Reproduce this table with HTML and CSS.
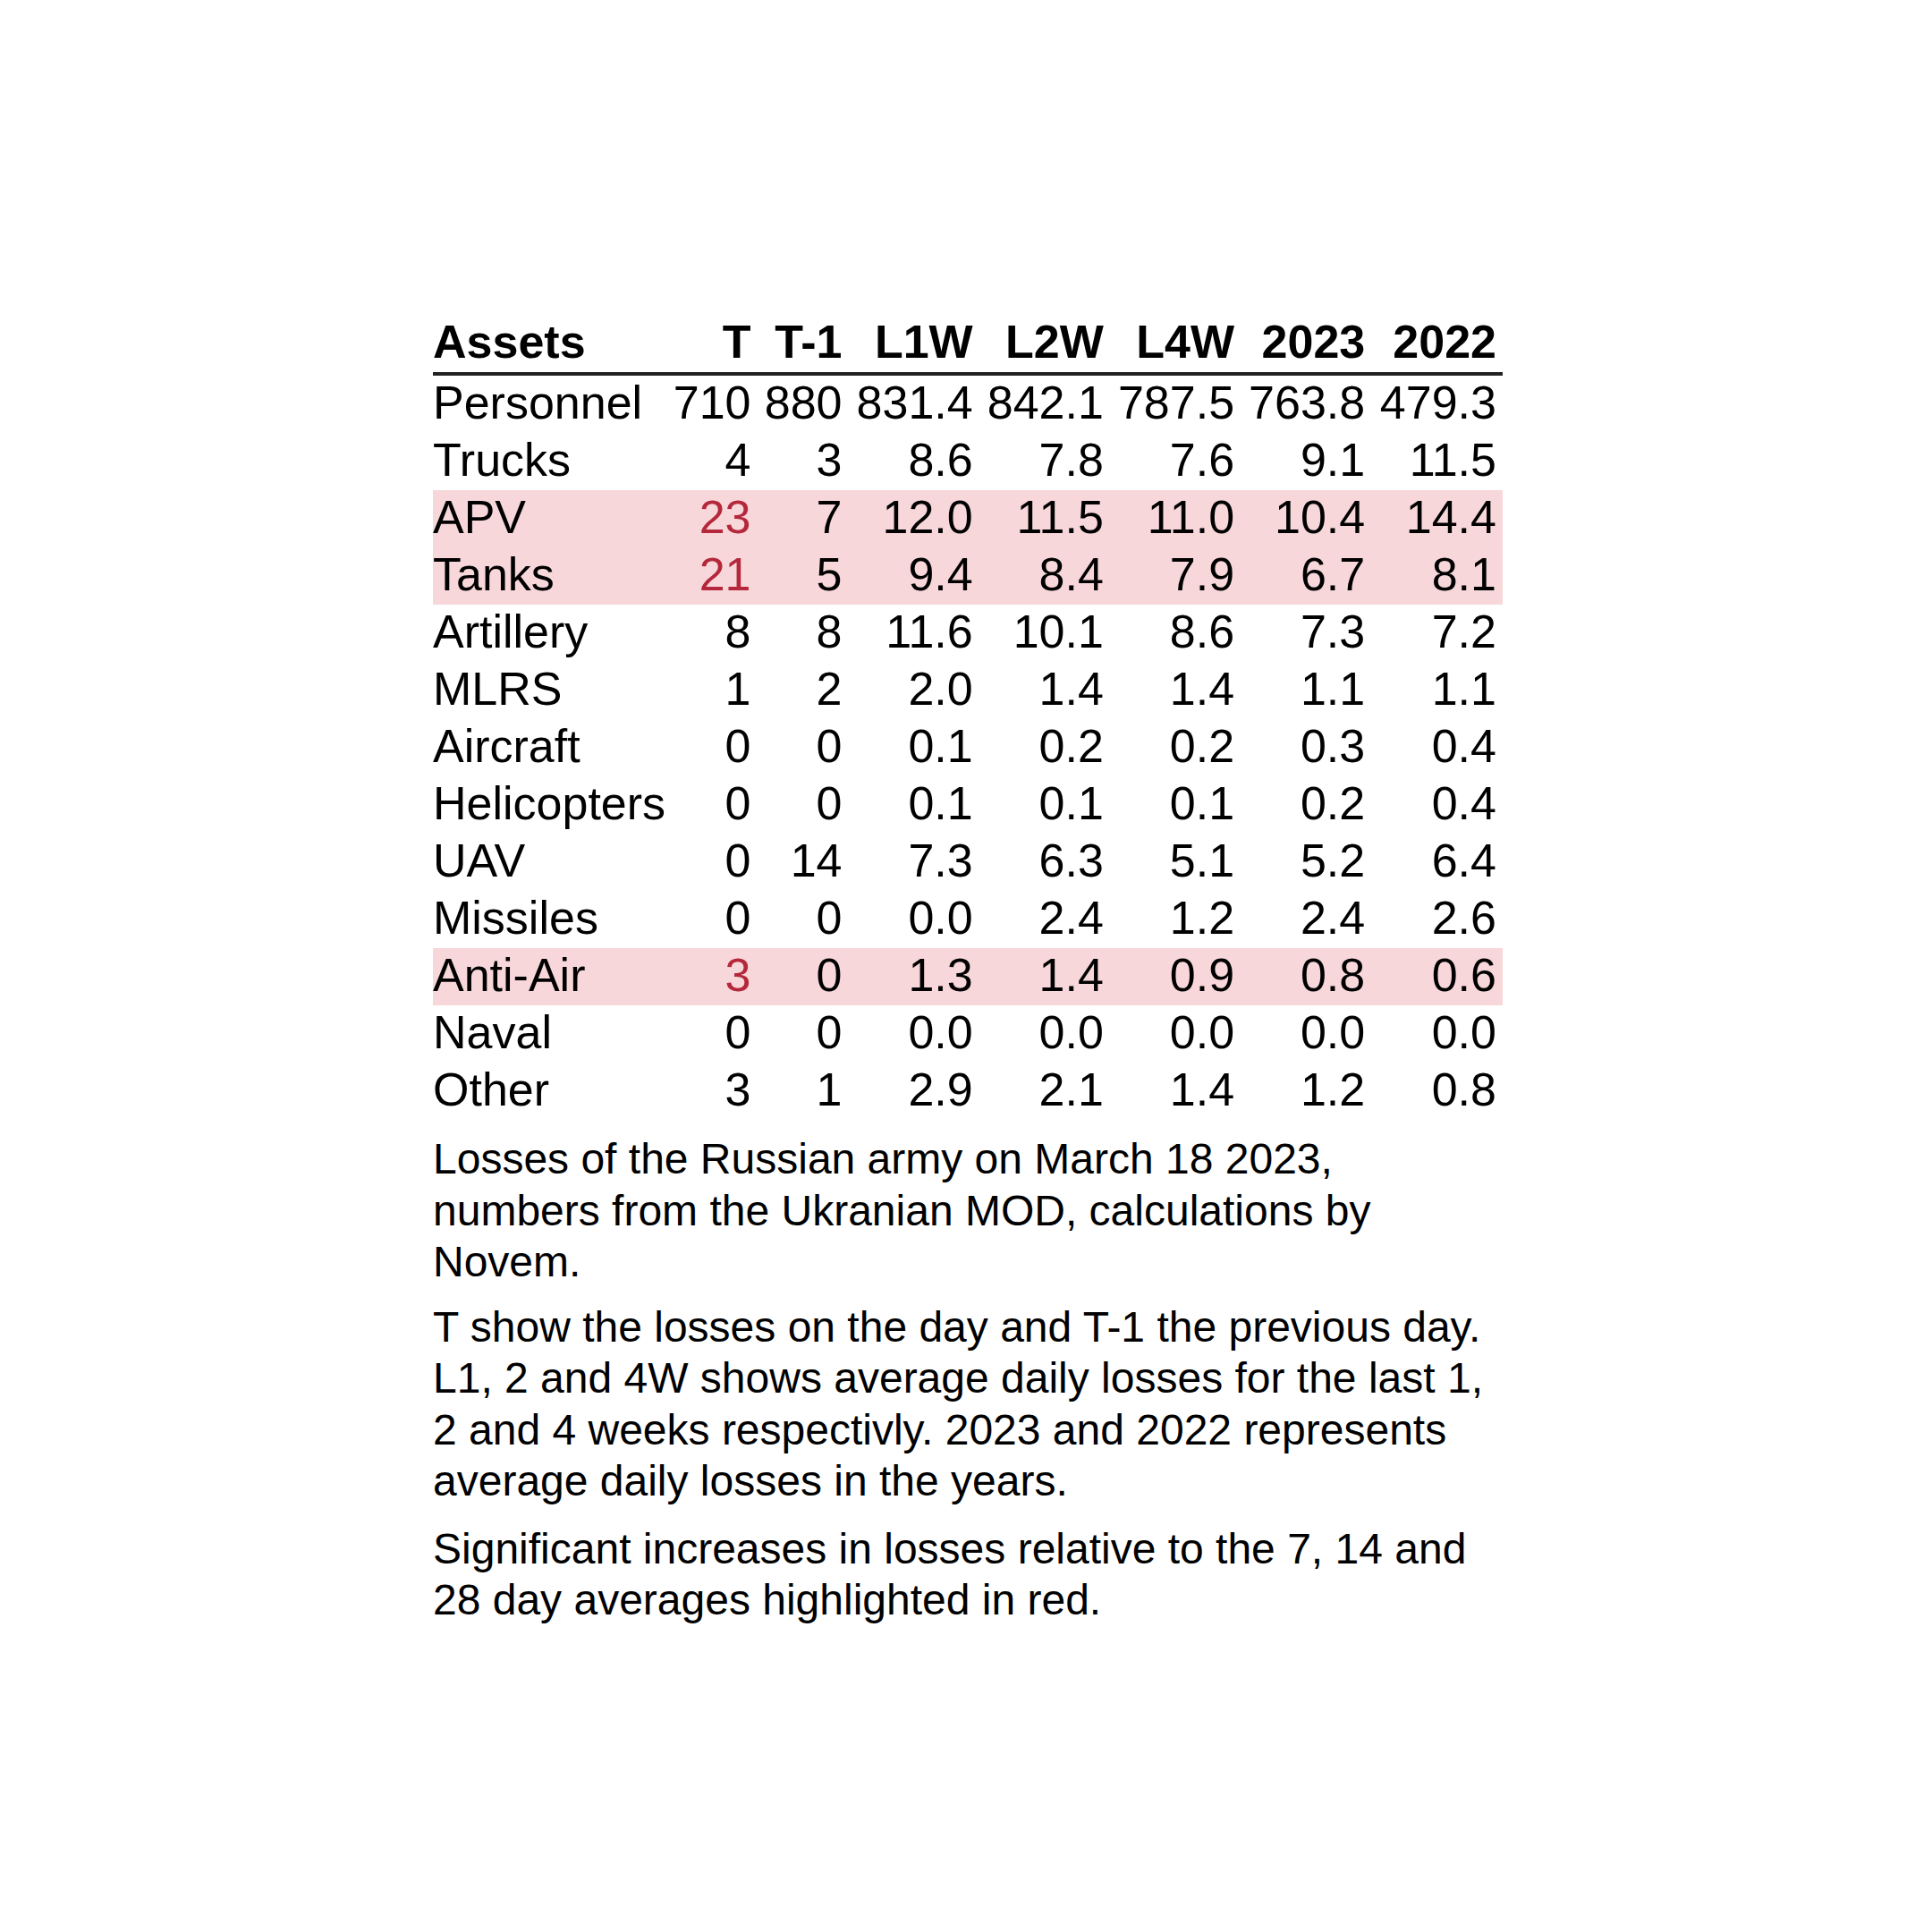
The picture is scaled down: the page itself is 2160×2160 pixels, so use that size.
FILE: index.html
```html
<!DOCTYPE html>
<html lang="en">
<head>
<meta charset="utf-8">
<title>Losses of the Russian army</title>
<link rel="stylesheet" href="styles.css">
</head>
<body>
<div class="page">
  <div class="report">
    <table class="losses">
      <colgroup>
        <col class="c-asset">
        <col class="c-t">
        <col class="c-t1">
        <col class="c-num">
        <col class="c-num">
        <col class="c-num">
        <col class="c-num">
        <col class="c-last">
      </colgroup>
      <thead>
        <tr>
          <th class="name">Assets</th>
          <th>T</th>
          <th>T-1</th>
          <th>L1W</th>
          <th>L2W</th>
          <th>L4W</th>
          <th>2023</th>
          <th class="end">2022</th>
        </tr>
      </thead>
      <tbody>
        <tr><td class="name">Personnel</td><td>710</td><td>880</td><td>831.4</td><td>842.1</td><td>787.5</td><td>763.8</td><td class="end">479.3</td></tr>
        <tr><td class="name">Trucks</td><td>4</td><td>3</td><td>8.6</td><td>7.8</td><td>7.6</td><td>9.1</td><td class="end">11.5</td></tr>
        <tr class="hl"><td class="name">APV</td><td class="red">23</td><td>7</td><td>12.0</td><td>11.5</td><td>11.0</td><td>10.4</td><td class="end">14.4</td></tr>
        <tr class="hl"><td class="name">Tanks</td><td class="red">21</td><td>5</td><td>9.4</td><td>8.4</td><td>7.9</td><td>6.7</td><td class="end">8.1</td></tr>
        <tr><td class="name">Artillery</td><td>8</td><td>8</td><td>11.6</td><td>10.1</td><td>8.6</td><td>7.3</td><td class="end">7.2</td></tr>
        <tr><td class="name">MLRS</td><td>1</td><td>2</td><td>2.0</td><td>1.4</td><td>1.4</td><td>1.1</td><td class="end">1.1</td></tr>
        <tr><td class="name">Aircraft</td><td>0</td><td>0</td><td>0.1</td><td>0.2</td><td>0.2</td><td>0.3</td><td class="end">0.4</td></tr>
        <tr><td class="name">Helicopters</td><td>0</td><td>0</td><td>0.1</td><td>0.1</td><td>0.1</td><td>0.2</td><td class="end">0.4</td></tr>
        <tr><td class="name">UAV</td><td>0</td><td>14</td><td>7.3</td><td>6.3</td><td>5.1</td><td>5.2</td><td class="end">6.4</td></tr>
        <tr><td class="name">Missiles</td><td>0</td><td>0</td><td>0.0</td><td>2.4</td><td>1.2</td><td>2.4</td><td class="end">2.6</td></tr>
        <tr class="hl"><td class="name">Anti-Air</td><td class="red">3</td><td>0</td><td>1.3</td><td>1.4</td><td>0.9</td><td>0.8</td><td class="end">0.6</td></tr>
        <tr><td class="name">Naval</td><td>0</td><td>0</td><td>0.0</td><td>0.0</td><td>0.0</td><td>0.0</td><td class="end">0.0</td></tr>
        <tr><td class="name">Other</td><td>3</td><td>1</td><td>2.9</td><td>2.1</td><td>1.4</td><td>1.2</td><td class="end">0.8</td></tr>
      </tbody>
    </table>
    <div class="notes">
      <p>Losses of the Russian army on March 18 2023, numbers from the Ukranian MOD, calculations by Novem.</p>
      <p>T show the losses on the day and T-1 the previous day. L1, 2 and 4W shows average daily losses for the last 1, 2 and 4 weeks respectivly. 2023 and 2022 represents average daily losses in the years.</p>
      <p>Significant increases in losses relative to the 7, 14 and 28 day averages highlighted in red.</p>
    </div>
  </div>
</div>
</body>
</html>
```

FILE: styles.css
```css
html, body {
  margin: 0;
  padding: 0;
  background: #ffffff;
}

.page {
  padding: 352px 0 0 484px;
  font-family: "Liberation Sans", Arial, Helvetica, sans-serif;
  color: #000000;
}

.report {
  width: 1196px;
  display: flex;
  flex-direction: column;
}

.losses {
  width: 1196px;
  table-layout: fixed;
  border-collapse: separate;
  border-spacing: 0;
  font-size: 52px;
}

.c-asset { width: 264.5px; }
.c-t { width: 102px; }
.c-t1 { width: 102px; }
.c-num { width: 146.2px; }
.c-last { width: 142.7px; }

.losses th,
.losses td {
  height: 61px;
  line-height: 61px;
  padding: 0 11px 3px 0;
  text-align: right;
  white-space: nowrap;
  vertical-align: top;
  box-sizing: content-box;
}

.losses th {
  font-weight: bold;
  border-bottom: 4px solid #222222;
}

.losses .name {
  text-align: left;
  padding-right: 0;
}

.losses .end {
  padding-right: 7px;
}

.losses tr.hl td {
  background: #f8d7da;
}

.losses td.red {
  color: #b5283b;
}

.notes {
  margin-top: 15px;
  font-size: 48px;
  line-height: 57.5px;
}

.notes p {
  margin: 0 0 15px 0;
}

.notes p:nth-child(2) {
  margin-bottom: 18px;
}
```
